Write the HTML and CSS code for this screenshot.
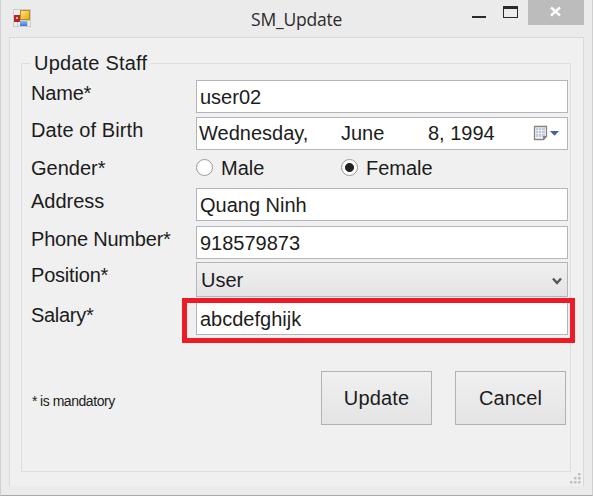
FILE: index.html
```html
<!DOCTYPE html>
<html lang="en">
<head>
<meta charset="utf-8">
<title>SM_Update</title>
<link rel="stylesheet" href="styles.css">
</head>
<body>
<div class="window">
  <header class="titlebar">
    <svg class="app-icon" width="18" height="18" viewBox="0 0 18 18">
      <defs>
        <linearGradient id="gold" x2="1" y2="1"><stop stop-color="#ffe88c"/><stop offset="1" stop-color="#e9a800"/></linearGradient>
        <linearGradient id="blue" x2="0" y2="1"><stop stop-color="#8fb8f5"/><stop offset="1" stop-color="#3c76dc"/></linearGradient>
      </defs>
      <rect width="18" height="18" fill="#cbcbcb"/>
      <path d="M1 1h6v5H1zM1 13h3v4H1zM5 13h2v4H5zM15 12h2v5h-2z" fill="#ececec"/>
      <rect x="1" y="6" width="6" height="7" fill="#b32920"/>
      <rect x="3" y="8" width="2" height="2" fill="#f0b0a8"/>
      <rect x="7.5" y="1.5" width="9" height="9" fill="url(#gold)" stroke="#b98a1c"/>
      <rect x="7" y="12" width="7" height="5" fill="url(#blue)"/>
    </svg>
    <h1 class="title">SM_Update</h1>
    <div class="controls">
      <svg width="120" height="25" viewBox="0 0 120 25" shape-rendering="crispEdges">
        <path d="M0 16h14v2H0z" fill="#2a2a2a"/>
        <path d="M31 6h15v12H31zM32 9v8h13V9z" fill="#2a2a2a" fill-rule="evenodd"/>
        <rect x="56" width="56" height="25" fill="#bcbcbc"/>
        <path d="M79 7.500l9 8M88 7.500l-9 8" stroke="#fff" stroke-width="2.400" shape-rendering="auto"/>
      </svg>
    </div>
  </header>
  <main class="client">
    <fieldset class="group">
      <legend class="legend">Update Staff</legend>
      <div class="form">
        <label class="label name">Name*</label>
        <div class="field">user02</div>

        <label class="label dob">Date of Birth</label>
        <div class="field date">
          <span class="weekday">Wednesday,</span><span class="month">June</span><span class="day">8, 1994</span>
          <svg class="calendar" width="26" height="16" viewBox="0 0 26 16">
            <path d="M1.500 1.500h12v10l-3 3h-9z" fill="#f4f4f8" stroke="#8a8280" stroke-width="1.300"/>
            <path d="M3 3h9v9H3z" fill="#c3c9dc"/>
            <path d="M5.500 3v9M8.500 3v9M3 5.500h9M3 8.500h9" stroke="#eef0f8" stroke-width=".8"/>
            <path d="M10 14.500V11h4z" fill="#8a8280"/>
            <path d="M17 6h9l-4.500 4.700z" fill="#41659c"/>
          </svg>
        </div>

        <label class="label gender">Gender*</label>
        <div class="radios">
          <span class="radio"></span><span class="male">Male</span>
          <span class="radio checked"></span><span class="female">Female</span>
        </div>

        <label class="label address">Address</label>
        <div class="field">Quang Ninh</div>

        <label class="label phone">Phone Number*</label>
        <div class="field">918579873</div>

        <label class="label position">Position*</label>
        <div class="field combo"><span>User</span>
          <svg width="10" height="9" viewBox="0 0 10 9"><path d="M1 1.500l4 4.500 4-4.500" fill="none" stroke="#555" stroke-width="2.400"/></svg>
        </div>

        <label class="label salary">Salary*</label>
        <div class="field marked">abcdefghijk</div>
      </div>
      <footer class="footer">
        <span class="note"><span class="star">*</span>is mandatory</span>
        <button class="button" type="button">Update</button>
        <button class="button cancel" type="button">Cancel</button>
      </footer>
    </fieldset>
    <svg class="grip" width="11" height="11" viewBox="0 0 11 11" fill="#c0c0c0">
      <path d="M8 0h2.500v2.500H8zM4 4h2.500v2.500H4zM8 4h2.500v2.500H8zM0 8h2.500v2.500H0zM4 8h2.500v2.500H4zM8 8h2.500v2.500H8z"/>
    </svg>
  </main>
</div>
</body>
</html>
```
FILE: styles.css
```css
* { box-sizing: border-box; }

body {
  margin: 0;
  font: 20px/22px "Liberation Sans", Arial, sans-serif;
  color: #1c1c1c;
}

.window {
  width: 593px;
  height: 496px;
  padding: 0 8px;
  background: #ebebeb;
  border: solid #cfcfcf;
  border-width: 0 1px 1px;
  border-bottom-color: #a8a8a8;
}

.titlebar {
  display: grid;
  grid-template-columns: 238px 1fr 120px;
  height: 37px;
}

.app-icon { margin: 9px 0 0 4px; }

.title {
  margin: 7px 0 0 4px;
  font: 17.5px/24px "Open Sans", sans-serif;
  letter-spacing: -0.2px;
  color: #2b2b2b;
}

.controls { width: 120px; margin-left: 8px; }
.controls svg { display: block; }

.client {
  position: relative;
  height: 449px;
  padding: 14px 12px 0 11px;
  background: #f0f0f0;
  border: solid #dadada;
  border-width: 1px 1px 0;
}

.group {
  height: 420px;
  margin: 0;
  padding: 0;
  border: 1px solid #dedede;
}

.legend {
  height: 22px;
  margin-left: 8px;
  padding: 0 4px;
  letter-spacing: 0.2px;
}

.form {
  display: grid;
  grid-template-columns: 165px 372px;
  grid-template-rows: 37px 37px 34px 38px 36px 40px 33px;
  margin: 6px 0 0 9px;
}

.label { padding-top: 2px; white-space: nowrap; }
.name { padding-top: 2px; letter-spacing: -0.2px; }
.dob { letter-spacing: 0.1px; }
.gender { padding-top: 3px; }
.phone { letter-spacing: -0.2px; }
.position { letter-spacing: -0.2px; }
.salary { letter-spacing: -0.3px; }

.field {
  height: 33px;
  padding: 5px 3px 0;
  background: #fff;
  border: 1px solid #b4b4bc;
  white-space: nowrap;
}

.date { display: flex; padding: 4px 0 0 2px; }
.weekday { width: 142px; }
.month { width: 87px; }
.day { width: 105px; }
.calendar { margin-top: 3px; }

.radios { display: flex; padding-top: 3px; }

.radio {
  width: 17px;
  height: 17px;
  margin: 2px 8px 0 0;
  background: #fff;
  border: 1.5px solid #999;
  border-radius: 50%;
}

.checked { background: radial-gradient(circle, #222 4px, #fff 5px); }
.male { width: 120px; }

.combo {
  display: flex;
  justify-content: space-between;
  height: 35px;
  padding: 6px 5px 0 4px;
  background: linear-gradient(#f0f0f0, #e4e4e4);
}

.combo svg { margin-top: 8px; }

.marked { position: relative; }
.marked::after {
  content: "";
  position: absolute;
  inset: -5px -8px -9px -15px;
  border: 5px solid #ed1c24;
}

.footer { display: flex; padding: 36px 0 0 10px; }

.note {
  width: 289px;
  padding-top: 19px;
  font-size: 14px;
  letter-spacing: -0.45px;
}

.star { margin-right: 3px; }

.button {
  width: 111px;
  height: 54px;
  padding: 0;
  font: inherit;
  letter-spacing: 0.15px;
  color: inherit;
  background: linear-gradient(#f0f0f0, #e4e4e4);
  border: 1px solid #b2b2b2;
}

.cancel { margin-left: 23px; }

.grip { position: absolute; right: 2px; bottom: 2px; }
```
